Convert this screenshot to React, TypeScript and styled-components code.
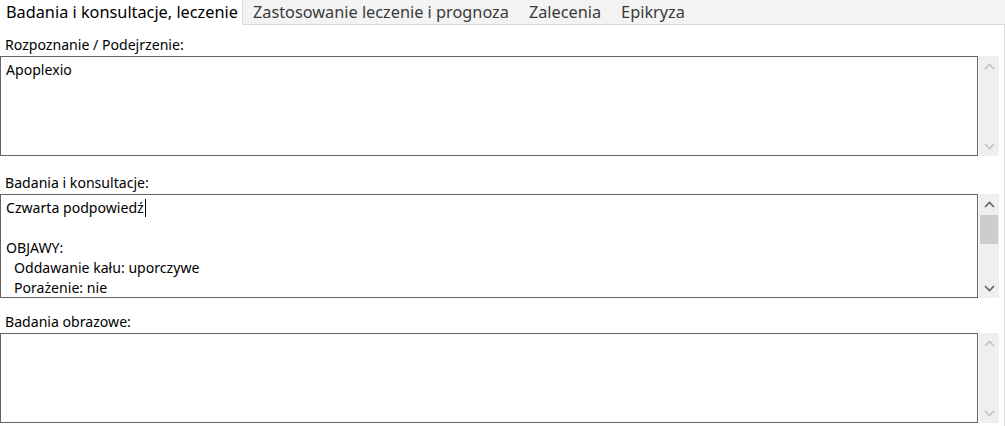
import React, { FC } from "react";
import styled, { createGlobalStyle } from "styled-components";

const GlobalStyle = createGlobalStyle`
  html, body {
    margin: 0;
    padding: 0;
    background: #ffffff;
  }
  body {
    font-family: "Noto Sans", "Open Sans", sans-serif;
    color: #000000;
  }
`;

const tabs = [
  "Badania i konsultacje, leczenie",
  "Zastosowanie leczenie i prognoza",
  "Zalecenia",
  "Epikryza",
];

interface ChevronProps {
  dir: "up" | "down";
  enabled: boolean;
}

const Chevron: FC<ChevronProps> = ({ dir, enabled }) => (
  <svg width="11" height="7" viewBox="0 0 11 7">
    <polyline
      points={dir === "up" ? "1,6 5.5,1.5 10,6" : "1,1 5.5,5.5 10,1"}
      fill="none"
      stroke={enabled ? "#606060" : "#c2c2c2"}
      strokeWidth="1.6"
    />
  </svg>
);

interface FieldProps {
  label: string;
  labelHeight: number;
  boxHeight: number;
  active?: boolean;
  children?: React.ReactNode;
}

const Field: FC<FieldProps> = ({
  label,
  labelHeight,
  boxHeight,
  active = false,
  children,
}) => (
  <StyledField>
    <StyledLabel height={labelHeight}>{label}</StyledLabel>
    <StyledEditRow height={boxHeight}>
      <StyledTextBox>{children}</StyledTextBox>
      <StyledScrollBar>
        <StyledArrow>
          <Chevron dir="up" enabled={active} />
        </StyledArrow>
        <StyledTrack>{active && <StyledThumb />}</StyledTrack>
        <StyledArrow>
          <Chevron dir="down" enabled={active} />
        </StyledArrow>
      </StyledScrollBar>
    </StyledEditRow>
  </StyledField>
);

const App: FC = () => {
  return (
    <>
      <GlobalStyle />
      <StyledPage>
        <StyledTabBar>
          {tabs.map((t, i) => (
            <StyledTab key={t} active={i === 0}>
              {t}
            </StyledTab>
          ))}
          <StyledTabFiller />
        </StyledTabBar>
        <StyledPanel>
          <Field label="Rozpoznanie / Podejrzenie:" labelHeight={31} boxHeight={100}>
            <StyledLine>Apoplexio</StyledLine>
          </Field>
          <Field
            label="Badania i konsultacje:"
            labelHeight={38}
            boxHeight={104}
            active
          >
            <StyledLine>
              Czwarta podpowiedź
              <StyledCaret />
            </StyledLine>
            <StyledLine>&nbsp;</StyledLine>
            <StyledLine>OBJAWY:</StyledLine>
            <StyledLine indent>Oddawanie kału: uporczywe</StyledLine>
            <StyledLine indent>Porażenie: nie</StyledLine>
          </Field>
          <Field label="Badania obrazowe:" labelHeight={35} boxHeight={90} />
        </StyledPanel>
      </StyledPage>
    </>
  );
};

export default App;

const StyledPage = styled.div`
  width: 1005px;
  height: 426px;
  overflow: hidden;
  display: flex;
  flex-direction: column;
`;

const StyledTabBar = styled.div`
  display: flex;
  height: 25px;
  flex-shrink: 0;
`;

const StyledTab = styled.div<{ active: boolean }>`
  display: flex;
  align-items: center;
  box-sizing: border-box;
  padding: ${(p) => (p.active ? "0 0 0 6px" : "0 10px")};
  width: ${(p) => (p.active ? "243px" : "auto")};
  font-size: 16.3px;
  white-space: nowrap;
  color: ${(p) => (p.active ? "#000000" : "#3a3a3a")};
  background: ${(p) => (p.active ? "#ffffff" : "#f3f3f3")};
  border-bottom: 1px solid ${(p) => (p.active ? "#ffffff" : "#d9d9d9")};
  border-right: ${(p) => (p.active ? "1px solid #d9d9d9" : "none")};
`;

const StyledTabFiller = styled.div`
  flex: 1;
  background: #f3f3f3;
  border-bottom: 1px solid #d9d9d9;
`;

const StyledPanel = styled.div`
  flex: 1;
  display: flex;
  flex-direction: column;
  padding-right: 5px;
  border-right: 1px solid #dcdcdc;
`;

const StyledField = styled.div`
  display: flex;
  flex-direction: column;
`;

const StyledLabel = styled.div<{ height: number }>`
  height: ${(p) => p.height}px;
  display: flex;
  align-items: flex-end;
  padding: 0 0 3px 5px;
  box-sizing: border-box;
  font-size: 14.1px;
  line-height: 16px;
  color: #000000;
`;

const StyledEditRow = styled.div<{ height: number }>`
  display: flex;
  height: ${(p) => p.height}px;
`;

const StyledTextBox = styled.div`
  width: 978px;
  box-sizing: border-box;
  border: 1px solid #646464;
  padding: 3px 5px;
  font-size: 14.1px;
  line-height: 20px;
  overflow: hidden;
`;

const StyledLine = styled.div<{ indent?: boolean }>`
  display: flex;
  align-items: center;
  height: 20px;
  padding-left: ${(p) => (p.indent ? "8px" : "0")};
  white-space: pre;
`;

const StyledCaret = styled.span`
  display: inline-block;
  width: 1px;
  height: 18px;
  background: #000000;
  margin-left: 1px;
`;

const StyledScrollBar = styled.div`
  width: 20px;
  margin-left: 1px;
  display: flex;
  flex-direction: column;
  background: #efefef;
`;

const StyledArrow = styled.div`
  height: 20px;
  display: flex;
  align-items: center;
  justify-content: center;
`;

const StyledTrack = styled.div`
  flex: 1;
  display: flex;
  flex-direction: column;
`;

const StyledThumb = styled.div`
  height: 29px;
  margin: 1px 1px 0;
  background: #cdcdcd;
`;
